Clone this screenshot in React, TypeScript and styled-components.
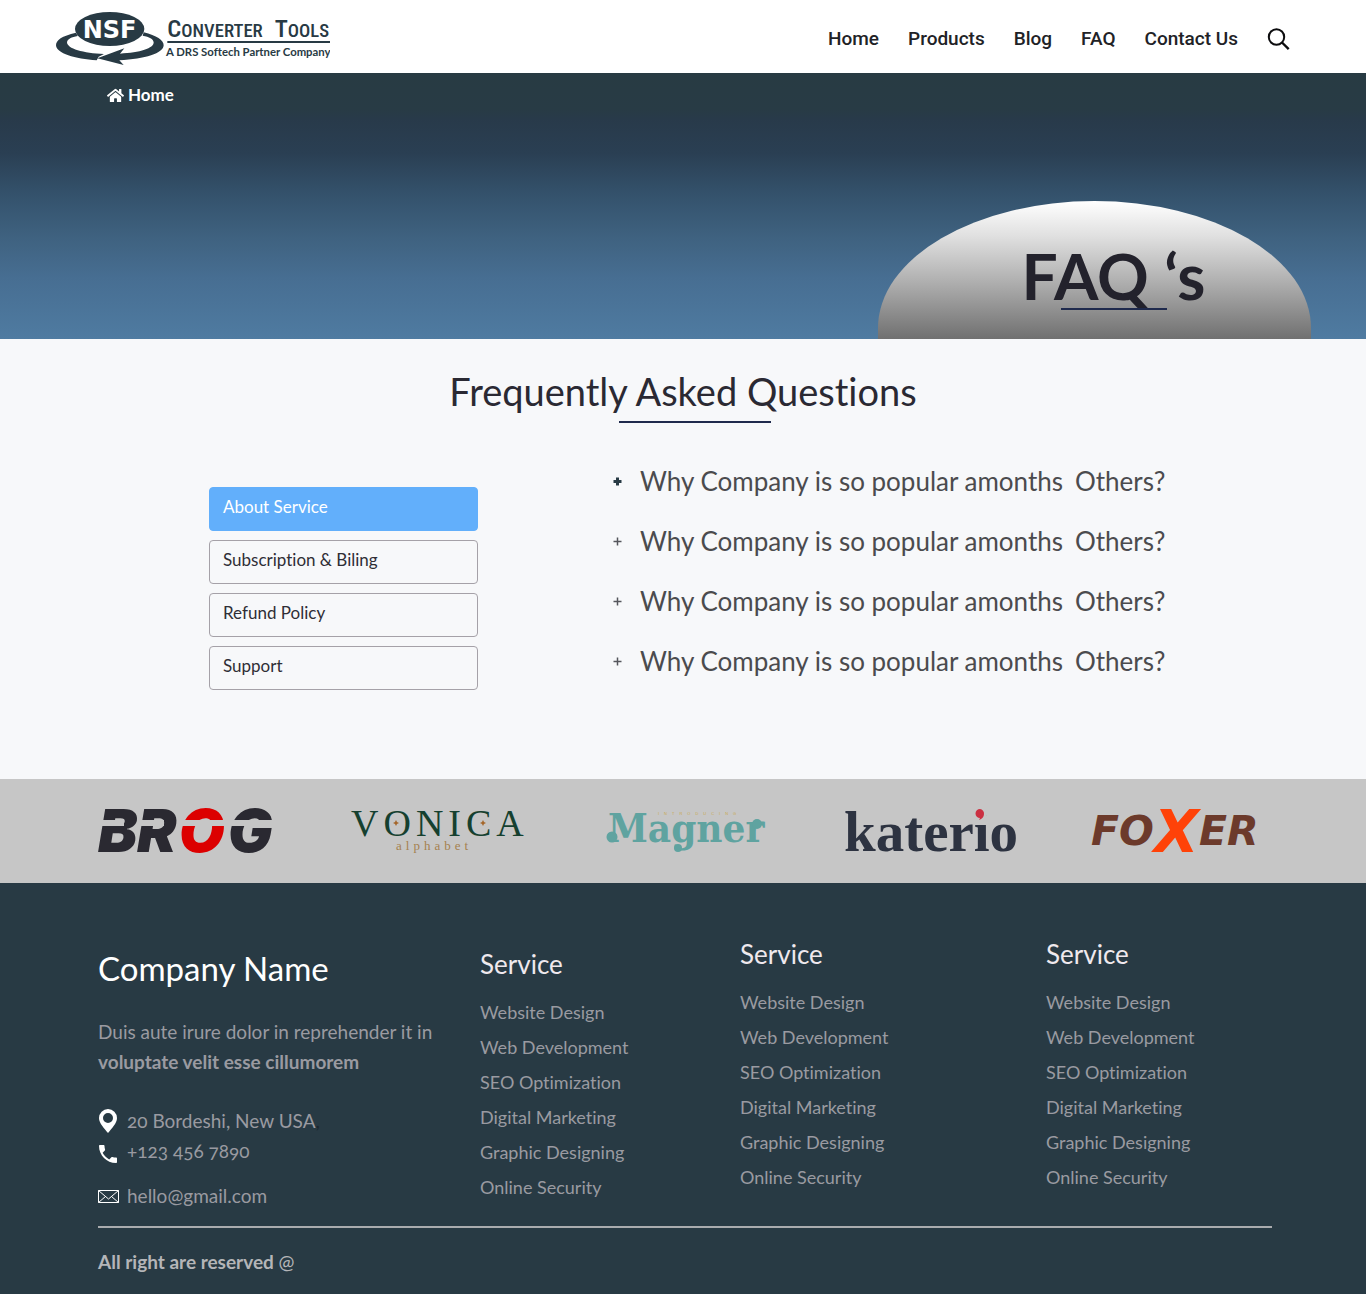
import React, { useState } from "react";
import styled, { createGlobalStyle } from "styled-components";
import { FaHome } from "react-icons/fa";
import { MdPhone } from "react-icons/md";

const slate = "#283a44";
const ink = "#23222c";
const strip = "#c6c6c6";
const navy = "#1f2a4d";

const GlobalStyle = createGlobalStyle`
  *, *::before, *::after { box-sizing: border-box; }
  body {
    margin: 0;
    background: #f7f8fa;
    font-family: Lato, "Liberation Sans", sans-serif;
    font-variant-ligatures: no-common-ligatures;
    font-variant-numeric: oldstyle-nums;
  }
  h1, h2, h3, p, ul { margin: 0; padding: 0; }
  ul { list-style: none; }
  a { color: inherit; text-decoration: none; }
  button { font: inherit; color: inherit; cursor: pointer; }
  svg { display: block; }
`;

/* ---------- header ---------- */

const Header = styled.header`
  display: flex;
  align-items: center;
  justify-content: space-between;
  height: 73px;
  padding: 5px 76px 0 56px;
  background: #fff;
`;

const Nav = styled.nav`
  display: flex;
  align-items: center;
  gap: 29px;
  color: #212226;
  font-family: Roboto, sans-serif;
  font-size: 19px;
  font-weight: 500;
  line-height: 24px;
`;

const SearchButton = styled.button`
  display: flex;
  padding: 0;
  border: 0;
  background: none;
`;

/* ---------- hero ---------- */

const Hero = styled.section`
  display: flex;
  flex-direction: column;
  justify-content: space-between;
  height: 266px;
  background: linear-gradient(
    #283b43 0,
    #283b45 36px,
    #283a4a 46px,
    #2a3f53 80px,
    #34526c 122px,
    #3f6280 165px,
    #476e92 205px,
    #4f7ba1 266px
  );
`;

const Breadcrumb = styled.nav`
  padding: 12px 107px 0;

  a {
    display: inline-flex;
    align-items: center;
    gap: 4px;
    color: #fff;
    font-size: 17px;
    font-weight: 700;
    line-height: 20px;
  }
`;

const Dome = styled.div`
  display: flex;
  flex-direction: column;
  align-items: center;
  align-self: flex-end;
  width: 433px;
  height: 138px;
  margin-right: 55px;
  padding: 43px 0 0 38px;
  border-radius: 50% 50% 0 0 / 92% 92% 0 0;
  background: linear-gradient(#fff 0, #e0e0e0 35px, #b0b0b0 80px, #707070 138px);
`;

const HeroTitle = styled.h1`
  color: ${ink};
  font-size: 64px;
  font-weight: 700;
  line-height: 64px;
  white-space: nowrap;
`;

const Rule = styled.span<{ $width: number }>`
  width: ${(p) => p.$width}px;
  height: 2px;
  background: ${navy};
`;

/* ---------- questions ---------- */

const Main = styled.main`
  min-height: 440px;
  padding-top: 28px;
`;

const TitleBlock = styled.div`
  display: flex;
  flex-direction: column;
  align-items: center;
  gap: 6px;

  ${Rule} { margin-left: 24px; }
`;

const Title = styled.h2`
  color: #2a2933;
  font-size: 38px;
  font-weight: 400;
  line-height: 48px;
`;

const Columns = styled.div`
  display: grid;
  grid-template-columns: 269px 1fr;
  gap: 135px;
  max-width: 960px;
  margin: 28px auto 0;
  padding-left: 6px;
`;

const Tabs = styled.div`
  display: flex;
  flex-direction: column;
  gap: 9px;
  padding-top: 36px;
`;

const Tab = styled.button<{ $active: boolean }>`
  height: 44px;
  padding: 0 13px 6px;
  border: 1px solid ${(p) => (p.$active ? "#62affb" : "#a5a1a8")};
  border-radius: 4px;
  background: ${(p) => (p.$active ? "#62affb" : "transparent")};
  color: ${(p) => (p.$active ? "#fff" : "#2f2e36")};
  font-size: 17px;
  text-align: left;
`;

const Question = styled.button<{ $open: boolean }>`
  display: grid;
  grid-template-columns: 27px auto auto;
  justify-content: start;
  align-items: center;
  width: 100%;
  height: 60px;
  padding: 0;
  border: 0;
  background: none;
  color: #4b4b4e;
  font-size: 26px;
  text-align: left;
  white-space: nowrap;

  svg {
    color: ${(p) => (p.$open ? slate : "#55565c")};
    stroke-width: ${(p) => (p.$open ? 3 : 1.5)};
  }
  span + span { margin-left: 12px; }
`;

/* ---------- brands ---------- */

const Brands = styled.section`
  display: flex;
  align-items: center;
  justify-content: space-between;
  height: 104px;
  padding: 0 100px 0 98px;
  background: ${strip};

  svg { overflow: visible; }
`;

/* ---------- footer ---------- */

const Footer = styled.footer`
  padding: 0 94px 18px 98px;
  background: ${slate};
  color: #9a9aa1;
`;

const FooterGrid = styled.div`
  display: grid;
  grid-template-columns: 382fr 260fr 306fr 226fr;
  padding: 55px 0 15px;
`;

const Company = styled.div`
  padding-top: 10px;
  font-size: 19px;
  line-height: 30px;
`;

const CompanyName = styled.h2`
  margin-bottom: 29px;
  color: #fff;
  font-size: 33px;
  font-weight: 400;
  line-height: 40px;
`;

const Blurb = styled.p`
  margin-bottom: 29px;

  strong { display: block; }
`;

const Contact = styled.li<{ $gapAbove?: boolean; $low?: boolean }>`
  display: grid;
  grid-template-columns: 20px auto;
  align-items: center;
  justify-content: start;
  gap: 9px;
  margin-top: ${(p) => (p.$gapAbove ? 15 : 0)}px;

  svg {
    align-self: ${(p) => (p.$low ? "end" : "center")};
    justify-self: center;
    color: #fff;
  }
  i { color: #1d2730; font-style: normal; }
`;

const ServiceColumn = styled.div<{ $lowered?: boolean }>`
  padding-top: ${(p) => (p.$lowered ? 10 : 0)}px;

  h3 {
    margin-bottom: 15px;
    color: #efe9ee;
    font-size: 26px;
    font-weight: 400;
    line-height: 32px;
  }
  li {
    font-size: 18px;
    line-height: 35px;
  }
`;

const Copyright = styled.p`
  padding-top: 19px;
  border-top: 2px solid #a9abae;
  color: #b4b5b8;
  font-size: 19px;
  font-weight: 700;
  line-height: 30px;

  span { font-weight: 400; }
`;

/* ---------- drawings ---------- */

const SiteLogo = () => (
  <svg width="274" height="54" viewBox="48 36 822 162" role="img" aria-label="NSF Converter Tools">
    <g fill={slate}>
      <path d="M108 98C65 108 48 120 48 136C49 160 105 177 170 181L176 170L192 162C130 160 81 146 81 127C82 117 95 111 113 108Z" />
      <path d="M311 97C350 107 371 120 371 136C370 160 316 177 238 181L251 195L172 175L253 145L240 161C300 158 342 145 341 127C340 117 328 110 308 107Z" />
      <ellipse cx="209" cy="87" rx="104" ry="51" />
      <rect x="382" y="123" width="488" height="6" />
    </g>
    <text x="128" y="114" fill="#fff" fontFamily="'DejaVu Sans', sans-serif" fontWeight="700" fontSize="72">NSF</text>
    <g fill={slate} fontFamily="'Roboto Condensed', Roboto, sans-serif" fontWeight="500">
      <text x="382" y="111" fontSize="74">C<tspan fontSize="56">ONVERTER</tspan></text>
      <text x="704" y="111" fontSize="74">T<tspan fontSize="56">OOLS</tspan></text>
    </g>
    <text x="378" y="169" fill={slate} fontFamily="Lato, sans-serif" fontWeight="700" fontSize="34">A DRS Softech Partner Company</text>
  </svg>
);

const SearchIcon = () => (
  <svg width="23" height="23" viewBox="0 0 23 23" fill="none" stroke="#0c0c0e" strokeWidth="2">
    <circle cx="9.5" cy="9" r="7.7" />
    <path d="M15 14.5L21.7 21.2" strokeWidth="2.4" />
  </svg>
);

const PlusIcon = () => (
  <svg width="9" height="9" viewBox="0 0 9 9" stroke="currentColor">
    <path d="M4.5 0.5V8.5M0.5 4.5H8.5" />
  </svg>
);

const PinIcon = () => (
  <svg width="18" height="24" viewBox="0 0 18 24" fill="currentColor">
    <path fillRule="evenodd" d="M9 0A9 9 0 0 0 0 9C0 14 5 19 9 24C13 19 18 14 18 9A9 9 0 0 0 9 0ZM9 4A5 5 0 1 1 9 14A5 5 0 1 1 9 4Z" />
  </svg>
);

const MailIcon = () => (
  <svg width="21" height="13" viewBox="0 0 21 13" fill="none" stroke="currentColor">
    <path d="M0.5 0.5H20.5V12.5H0.5ZM0.5 0.5L10.5 9L20.5 0.5M0.5 12.5L7.5 6.5M20.5 12.5L13.5 6.5" />
  </svg>
);

const Brog = () => (
  <svg width="177" height="42" viewBox="0 0 177 42" role="img" aria-label="Brog">
    <text y="42" fill="#2a2931" fontFamily="Inter, sans-serif" fontWeight="900" fontStyle="italic" fontSize="59">
      <tspan x="0">B</tspan>
      <tspan x="39">R</tspan>
      <tspan x="81" fill="#dc0000">O</tspan>
      <tspan x="130">G</tspan>
    </text>
    <path d="M0 10H26V16H0ZM42 10H66V16H42ZM80 10H178V16H80Z" fill={strip} />
  </svg>
);

const Vonica = () => (
  <svg width="170" height="42" viewBox="0 0 170 42" role="img" aria-label="Vonica alphabet">
    <text x="-4" y="26" fill="#15402f" fontFamily="'Liberation Serif', serif" fontSize="38" letterSpacing="5">VONICA</text>
    <text x="41" y="40" fill="#a5814f" fontFamily="'Liberation Serif', serif" fontSize="13" letterSpacing="4">alphabet</text>
    <path d="M41 10L42 12L44 13L42 14L41 16L40 14L38 13L40 12ZM128 10L129 12L131 13L129 14L128 16L127 14L125 13L127 12Z" fill="#a5662a" />
  </svg>
);

const Magner = () => (
  <svg width="156" height="42" viewBox="0 0 156 42" role="img" aria-label="Magner">
    <g fill="#5fa3a0">
      <text x="2" y="32" fontFamily="'DejaVu Serif Condensed', 'DejaVu Serif', serif" fontWeight="700" fontSize="40">Magner</text>
      <circle cx="6" cy="27" r="5.5" />
      <circle cx="72" cy="38" r="4" />
      <circle cx="151" cy="14" r="5" />
    </g>
    <text x="52" y="5" fill="#c9a94f" fontFamily="'Liberation Sans', sans-serif" fontSize="4" letterSpacing="5">INTRODUCING</text>
  </svg>
);

const Katerio = () => (
  <svg width="171" height="44" viewBox="0 0 171 44" role="img" aria-label="Katerio">
    <text x="2" y="42" fill="#2d3341" fontFamily="'Liberation Serif', serif" fontWeight="700" fontSize="57">katerio</text>
    <rect x="129" y="0" width="15" height="13" fill={strip} />
    <path d="M138 0A4.5 4.5 0 0 1 142 5C142 8 140 10 137 11L138 9A4.5 4.5 0 0 1 138 0Z" fill="#cb3042" />
  </svg>
);

const Foxer = () => (
  <svg width="173" height="42" viewBox="0 0 173 42" role="img" aria-label="Foxer">
    <g fontFamily="'DejaVu Sans', sans-serif" fontWeight="700" fontStyle="italic">
      <text x="-2" y="35" fill="#6c3a2b" fontSize="41">FO</text>
      <text x="106" y="35" fill="#6c3a2b" fontSize="41">ER</text>
      <text x="61" y="42" fill="#ff4208" fontSize="58">X</text>
    </g>
  </svg>
);

/* ---------- page ---------- */

const navLinks = ["Home", "Products", "Blog", "FAQ", "Contact Us"];
const topics = ["About Service", "Subscription & Biling", "Refund Policy", "Support"];
const services = [
  "Website Design",
  "Web Development",
  "SEO Optimization",
  "Digital Marketing",
  "Graphic Designing",
  "Online Security",
];

const Services = ({ lowered = false }: { lowered?: boolean }) => (
  <ServiceColumn $lowered={lowered}>
    <h3>Service</h3>
    <ul>
      {services.map((name) => (
        <li key={name}><a href="#service">{name}</a></li>
      ))}
    </ul>
  </ServiceColumn>
);

export default function App() {
  const [topic, setTopic] = useState(0);
  const [open, setOpen] = useState(0);

  return (
    <>
      <GlobalStyle />
      <Header>
        <a href="#home"><SiteLogo /></a>
        <Nav>
          {navLinks.map((label) => (
            <a key={label} href="#nav">{label}</a>
          ))}
          <SearchButton aria-label="Search"><SearchIcon /></SearchButton>
        </Nav>
      </Header>

      <Hero>
        <Breadcrumb>
          <a href="#home"><FaHome size={17} />Home</a>
        </Breadcrumb>
        <Dome>
          <HeroTitle>FAQ ‘s</HeroTitle>
          <Rule $width={106} />
        </Dome>
      </Hero>

      <Main>
        <TitleBlock>
          <Title>Frequently Asked Questions</Title>
          <Rule $width={152} />
        </TitleBlock>
        <Columns>
          <Tabs>
            {topics.map((label, i) => (
              <Tab key={label} $active={i === topic} onClick={() => setTopic(i)}>{label}</Tab>
            ))}
          </Tabs>
          <div>
            {[0, 1, 2, 3].map((i) => (
              <Question key={i} $open={i === open} onClick={() => setOpen(i)}>
                <PlusIcon />
                <span>Why Company is so popular amonths</span>
                <span>Others?</span>
              </Question>
            ))}
          </div>
        </Columns>
      </Main>

      <Brands>
        <Brog />
        <Vonica />
        <Magner />
        <Katerio />
        <Foxer />
      </Brands>

      <Footer>
        <FooterGrid>
          <Company>
            <CompanyName>Company Name</CompanyName>
            <Blurb>
              Duis aute irure dolor in reprehender it in
              <strong>voluptate velit esse cillumorem</strong>
            </Blurb>
            <ul>
              <Contact><PinIcon /><span>20 Bordeshi, New USA<i>,</i></span></Contact>
              <Contact $low><MdPhone size={24} /><a href="tel:+1234567890">+123 456 7890</a></Contact>
              <Contact $gapAbove><MailIcon /><a href="mailto:hello@gmail.com">hello@gmail.com</a></Contact>
            </ul>
          </Company>
          <Services lowered />
          <Services />
          <Services />
        </FooterGrid>
        <Copyright>All right are reserved <span>@</span></Copyright>
      </Footer>
    </>
  );
}
